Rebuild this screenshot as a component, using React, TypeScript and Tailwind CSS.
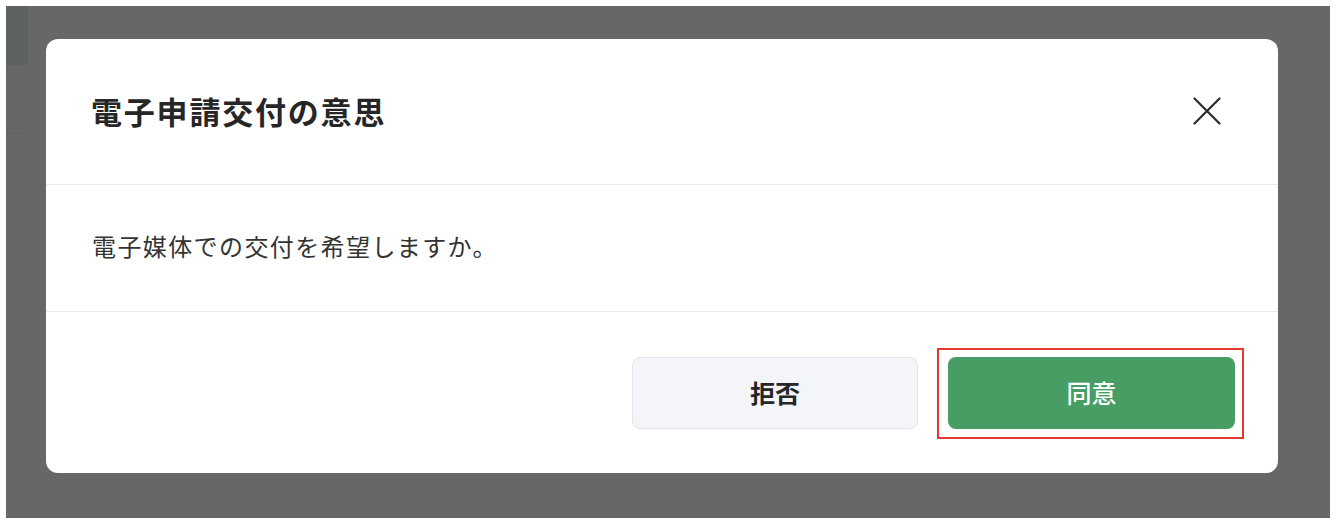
const font = { fontFamily: '"Noto Sans CJK JP", "Noto Sans", sans-serif' }

function CloseIcon() {
  return (
    <svg width="28" height="28" viewBox="0 0 28 28" fill="none" stroke="#2b2b2b" strokeWidth="2.2" strokeLinecap="round">
      <path d="M1.5 1.5 26.5 26.5M26.5 1.5 1.5 26.5" />
    </svg>
  )
}

export default function App() {
  return (
    <div className="w-[1340px] h-[530px] bg-white pt-[6px] pl-[6px]" style={font}>
      <div className="relative w-[1324px] h-[512px] bg-[#666766] pt-[33px] pl-[40px]">
        {/* page behind the overlay */}
        <div className="absolute left-0 top-0 w-[22px] h-[59px] bg-[#5e6260]" />
        <div className="absolute left-0 top-[127px] w-[22px] h-px bg-[#5f605f]" />

        {/* Dialog */}
        <div className="relative w-[1232px] h-[434px] bg-white rounded-[12px] flex flex-col">
          <div className="h-[146px] flex items-center justify-between pl-[45px] pr-[57px] border-b border-[#ebebeb]">
            <h2 className="text-[31px] font-bold tracking-[1.8px] text-[#262626] leading-none pb-[2px]">
              電子申請交付の意思
            </h2>
            <button className="pb-[1px]">
              <CloseIcon />
            </button>
          </div>

          <div className="h-[127px] flex items-center pl-[46px] pb-[4px] border-b border-[#ebebeb]">
            <p className="text-[24px] tracking-[1.4px] text-[#333333] leading-none">
              電子媒体での交付を希望しますか。
            </p>
          </div>

          <div className="flex-1 flex items-center justify-end gap-[30px] pr-[43px]">
            <button className="w-[286px] h-[72px] rounded-[8px] bg-[#f4f5f9] border border-[#e3e5ea] text-[25px] font-bold text-[#262626]">
              拒否
            </button>
            <div className="relative">
              <button className="w-[287px] h-[72px] rounded-[8px] bg-[#479d64] text-[25px] font-medium text-white">
                同意
              </button>
              {/* annotation frame */}
              <div className="absolute -left-[11px] -right-[9px] -top-[9px] -bottom-[10px] border-2 border-[#e53a30] pointer-events-none" />
            </div>
          </div>
        </div>
      </div>
    </div>
  )
}
